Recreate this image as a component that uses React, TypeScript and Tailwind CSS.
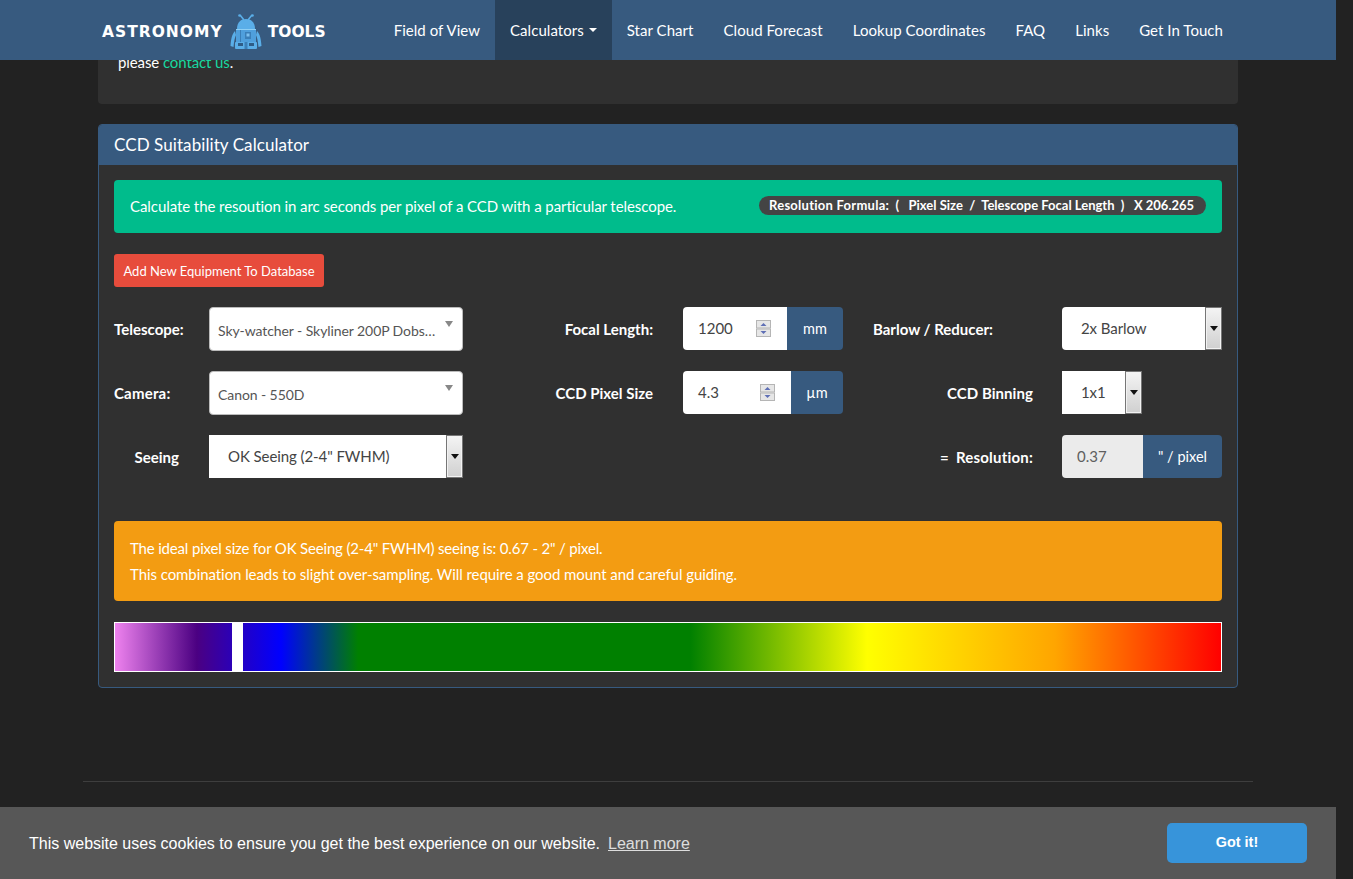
import React from "react";

function Robot() {
  return (
    <svg width="32" height="36" viewBox="0 0 32 36" className="ml-[7px] mr-[6px] mt-[4px] shrink-0">
      <path d="M10 1 L14 6 M22 1 L18 6" stroke="#5aaee8" strokeWidth="1.6" fill="none" />
      <circle cx="9.5" cy="1.5" r="1.3" fill="#5aaee8" />
      <circle cx="22.5" cy="1.5" r="1.3" fill="#5aaee8" />
      <path d="M7 15 C7 8 11 5 16 5 C21 5 25 8 25 15 Z" fill="#5aaee8" />
      <rect x="6" y="15" width="20" height="1" fill="#8fd0f5" />
      <rect x="6" y="16" width="20" height="12" fill="#4f9fdc" />
      <rect x="10" y="16" width="1" height="12" fill="#3a7fb8" />
      <rect x="15" y="18" width="6" height="7" fill="#3a7fb8" />
      <rect x="16.5" y="19.5" width="3" height="3" fill="#7cc0ef" />
      <path d="M5 17 C2 20 1 25 0.5 32 L3.5 33 C4 27 5 23 6 21 Z" fill="#5aaee8" />
      <path d="M27 17 C30 20 31 25 31.500 32 L28.500 33 C28 27 27 23 26 21 Z" fill="#5aaee8" />
      <rect x="5" y="28" width="22" height="7" rx="1" fill="#5aaee8" />
      <rect x="8" y="29" width="5" height="3" fill="#2f5c86" />
      <rect x="19" y="29" width="5" height="3" fill="#2f5c86" />
      <rect x="14.500" y="28" width="3" height="7" fill="#3a7fb8" />
    </svg>
  );
}

function Spinner() {
  return (
    <svg width="15" height="17" viewBox="0 0 15 17" className="shrink-0">
      <rect x="0.5" y="0.5" width="14" height="7.500" fill="#e6e6e6" stroke="#b5b5b5" />
      <rect x="0.5" y="9" width="14" height="7.500" fill="#e6e6e6" stroke="#b5b5b5" />
      <path d="M4.500 6 L7.500 3 L10.500 6 Z" fill="#5f6fb5" />
      <path d="M4.500 11 L10.500 11 L7.500 14 Z" fill="#5f6fb5" />
    </svg>
  );
}

function NativeArrow() {
  return (
    <div className="flex h-full w-[17px] shrink-0 items-center justify-center border border-[#767676] bg-gradient-to-b from-[#f4f4f4] to-[#d0d0d0] shadow-[inset_0_0_0_1px_#f2f2f2]">
      <svg width="8" height="5" viewBox="0 0 8 5">
        <path d="M0 0 L8 0 L4 5 Z" fill="#111" />
      </svg>
    </div>
  );
}

function Select2({ text }: { text: string }) {
  return (
    <div className="relative h-11 w-[254px] rounded border border-[#bbb] bg-white pl-2 pt-[14px] text-sm leading-[18px] tracking-[-0.08px] text-[#555]">
      <span className="block whitespace-nowrap">{text}</span>
      <span className="absolute right-[9px] top-[13px] h-0 w-0 border-x-[4px] border-t-[6px] border-x-transparent border-t-[#888]" />
    </div>
  );
}

function NativeSelect({ text, className }: { text: string; className: string }) {
  return (
    <div className={`flex h-[43px] items-center bg-white text-[15px] tracking-[-0.08px] text-[#444] ${className}`}>
      <span className="flex-1 pl-[19px]">{text}</span>
      <NativeArrow />
    </div>
  );
}

function NumberGroup({ value, unit, unitW }: { value: string; unit: string; unitW: string }) {
  return (
    <div className="flex h-[43px] w-40 overflow-hidden rounded">
      <div className="flex flex-1 items-center justify-between bg-white pl-[15px] pr-4 text-[15px] text-[#444]">
        <span>{value}</span>
        <Spinner />
      </div>
      <div className={`flex items-center justify-center bg-[#375a7f] text-[14.500px] text-white ${unitW}`}>{unit}</div>
    </div>
  );
}

const navItems = ["Field of View", "Calculators", "Star Chart", "Cloud Forecast", "Lookup Coordinates", "FAQ", "Links", "Get In Touch"];

export default function App() {
  return (
    <div className="relative h-[879px] w-full overflow-hidden bg-[#222222] font-['Lato',sans-serif] text-[15px] text-white">
      <div className="w-[1336px]">
        <header className="relative z-10 h-[60px] bg-[#375a7f]">
          <div className="mx-auto flex h-full w-[1170px] items-center pl-[19px] pr-[15px]">
            <div className="flex items-center font-['DejaVu_Sans',sans-serif] text-[15.500px] font-bold leading-none text-white">
              <span className="mt-[6px] tracking-[1px]">ASTRONOMY</span>
              <Robot />
              <span className="mt-[6px]">TOOLS</span>
            </div>
            <nav className="ml-auto flex h-full">
              {navItems.map((n) => (
                <a
                  key={n}
                  className={`flex h-full items-center px-[15px] text-[15px] tracking-[0.047px] text-white ${n === "Calculators" ? "bg-[#28415b]" : ""}`}
                >
                  {n}
                  {n === "Calculators" && (
                    <span className="ml-[5px] h-0 w-0 border-x-[4px] border-t-[4px] border-x-transparent border-t-white" />
                  )}
                </a>
              ))}
            </nav>
          </div>
        </header>

        <main className="mx-auto w-[1170px] px-[15px]">
          <div className="-mt-[9px] rounded bg-[#303030] pb-[31px] pl-5 leading-[22px] tracking-[-0.1px]">
            please <a className="text-[#18d8a0]">contact us</a>.
          </div>

          <section className="mt-5 overflow-hidden rounded border border-[#375a7f] bg-[#303030]">
            <div className="flex h-10 items-center bg-[#375a7f] px-[15px] text-[17px] tracking-[0.08px]">CCD Suitability Calculator</div>
            <div className="p-[15px]">
              <div className="flex h-[53px] items-center justify-between rounded bg-[#00bc8c] pl-4 pr-4">
                <span className="tracking-[-0.07px]">Calculate the resoution in arc seconds per pixel of a CCD with a particular telescope.</span>
                <span className="mb-[2px] flex h-[19px] w-[447px] items-center whitespace-pre rounded-full bg-[#444] pl-[10px] text-[13px] font-bold">
                  <span className="tracking-[0.26px]">Resolution Formula:</span>
                  {"  (   Pixel Size  /  Telescope Focal Length  )   X 206.265"}
                </span>
              </div>

              <button className="mt-[21px] block h-[33px] w-[210px] rounded-[3px] bg-[#e74c3c] pt-[2px] text-[13px] text-white">
                Add New Equipment To Database
              </button>

              <div className="mt-5 grid grid-cols-[95px_254px_220px_160px_219px_160px] grid-rows-[44px_44px_43px] items-start gap-y-5 font-bold">
                <div className="flex h-11 items-center">Telescope:</div>
                <div className="font-normal"><Select2 text="Sky-watcher - Skyliner 200P Dobs…" /></div>
                <div className="flex h-[43px] items-center justify-end pr-[30px] pt-[2px]">Focal Length:</div>
                <div className="font-normal"><NumberGroup value="1200" unit="mm" unitW="w-14" /></div>
                <div className="flex h-[43px] items-center pl-[30px] pt-[2px]">Barlow / Reducer:</div>
                <div className="font-normal"><NativeSelect text="2x Barlow" className="w-40 rounded" /></div>

                <div className="flex h-11 items-center tracking-[0.2px]">Camera:</div>
                <div className="font-normal"><Select2 text="Canon - 550D" /></div>
                <div className="flex h-[43px] items-center justify-end pr-[30px] pt-px">CCD Pixel Size</div>
                <div className="font-normal"><NumberGroup value="4.3" unit="µm" unitW="w-[52px]" /></div>
                <div className="flex h-[43px] items-center justify-end pr-[29px] pt-[2px] tracking-[0.06px]">CCD Binning</div>
                <div className="font-normal"><NativeSelect text="1x1" className="w-20" /></div>

                <div className="flex h-[43px] items-center justify-end pr-[30px] pt-[2px]">Seeing</div>
                <div className="font-normal"><NativeSelect text={'OK Seeing (2-4" FWHM)'} className="w-[254px]" /></div>
                <div />
                <div />
                <div className="flex h-[43px] items-center justify-end whitespace-pre pr-[29px] pt-[2px]">
                  {"=  "}
                  <span className="tracking-[0.2px]">Resolution:</span>
                </div>
                <div className="flex h-[43px] w-40 overflow-hidden rounded font-normal">
                  <div className="flex w-[81px] items-center bg-[#ebebeb] pl-[15px] text-[#5f5f5f]">0.37</div>
                  <div className="flex flex-1 items-center justify-center bg-[#375a7f] text-[14.500px]">" / pixel</div>
                </div>
              </div>

              <div className="mt-[43px] rounded bg-[#f39c12] px-4 py-[14px] leading-[26px]">
                <span className="tracking-[-0.17px]">The ideal pixel size for OK Seeing (2-4" FWHM) seeing is: 0.67 - 2" / pixel.</span>
                <br />
                <span className="tracking-[-0.07px]">This combination leads to slight over-sampling. Will require a good mount and careful guiding.</span>
              </div>

              <div className="relative mt-[21px] h-[50px] border border-white bg-[linear-gradient(to_right,#ee82ee_0%,#4b0082_7.4%,#0000ff_15%,#008000_22%,#008000_52%,#ffff00_68%,#ffa500_85%,#ff0000_100%)]">
                <div className="absolute inset-y-0 left-[117px] w-[11px] bg-white" />
              </div>
            </div>
          </section>
        </main>

        <div className="mx-auto mt-[93px] h-px w-[1170px] bg-[#3e3e3e]" />
      </div>

      <div className="absolute bottom-0 left-0 flex h-[72px] w-[1336px] items-center justify-between bg-[#575757] px-[29px] font-['Liberation_Sans',sans-serif] text-base">
        <span className="pt-[2px]">
          This website uses cookies to ensure you get the best experience on our website.
          <a className="ml-2 underline opacity-80">Learn more</a>
        </span>
        <button className="h-10 w-[140px] rounded-[5px] bg-[#3794da] text-[14.400px] font-bold text-white">Got it!</button>
      </div>
    </div>
  );
}
